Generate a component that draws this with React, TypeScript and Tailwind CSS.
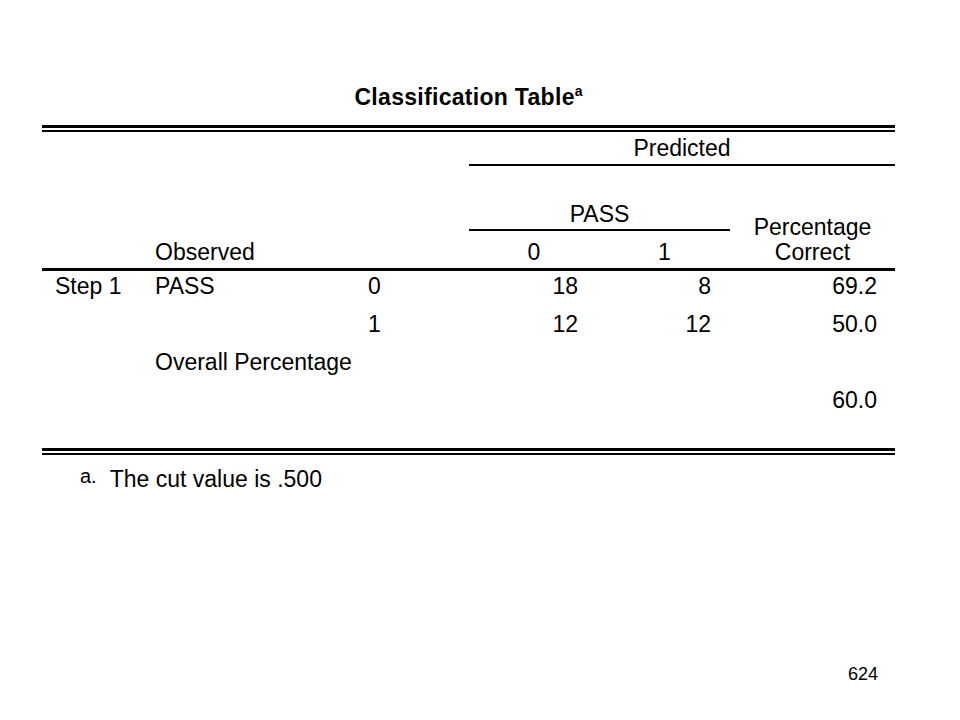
import React from "react";

export default function App() {
  return (
    <div className="w-[960px] h-[720px] bg-white text-black font-['Liberation_Sans',Arial,sans-serif] overflow-hidden">
      <div className="ml-[42px] w-[853px] pt-[84px] flex flex-col">
        <div className="h-[26px] text-center text-[23px] font-bold leading-[26px] tracking-[0.3px]">
          Classification Table<span className="text-[14px] font-bold leading-[0] align-[9px] tracking-normal">a</span>
        </div>
        <div className="mt-[15px] h-[3px] bg-black" />
        <div className="mt-[2px] h-[2px] bg-black" />

        {/* header */}
        <div className="grid grid-cols-[108px_200px_119px_130px_131px_165px] grid-rows-[34px_65px_37px] text-[23px] leading-[26px]">
          <div className="col-start-4 col-span-3 row-start-1 border-b-2 border-black text-center pt-[3px]">
            Predicted
          </div>
          <div className="col-start-4 col-span-2 row-start-2 border-b-2 border-black flex items-end justify-center pb-[2px]">
            PASS
          </div>
          <div className="col-start-6 row-start-2 row-span-2 flex flex-col items-center justify-end pb-[3px] leading-[25px]">
            <span>Percentage</span>
            <span>Correct</span>
          </div>
          <div className="col-start-2 row-start-3 flex items-end pl-[5px] pb-[3px]">Observed</div>
          <div className="col-start-4 row-start-3 flex items-end justify-center pb-[3px]">0</div>
          <div className="col-start-5 row-start-3 flex items-end justify-center pb-[3px]">1</div>
        </div>
        <div className="h-[3px] bg-black" />

        {/* body */}
        <div className="grid grid-cols-[108px_200px_119px_130px_131px_165px] auto-rows-[38px] text-[23px] leading-[26px]">
          <div className="pl-[13px] pt-[2px]">Step 1</div>
          <div className="pl-[5px] pt-[2px]">PASS</div>
          <div className="pl-[18px] pt-[2px]">0</div>
          <div className="text-right pr-[21px] pt-[2px]">18</div>
          <div className="text-right pr-[19px] pt-[2px]">8</div>
          <div className="text-right pr-[18px] pt-[2px]">69.2</div>

          <div />
          <div />
          <div className="pl-[18px] pt-[2px]">1</div>
          <div className="text-right pr-[21px] pt-[2px]">12</div>
          <div className="text-right pr-[19px] pt-[2px]">12</div>
          <div className="text-right pr-[18px] pt-[2px]">50.0</div>

          <div />
          <div className="col-span-2 pl-[5px] pt-[2px] whitespace-nowrap">Overall Percentage</div>
          <div />
          <div />
          <div />

          <div className="col-start-6 text-right pr-[18px] pt-[2px]">60.0</div>
        </div>

        <div className="mt-[25px] h-[3px] bg-black" />
        <div className="mt-[2px] h-[2px] bg-black" />

        <div className="mt-[11px] pl-[38px] flex items-baseline leading-[26px]">
          <span className="text-[20px] -translate-y-[4px]">a.</span>
          <span className="text-[23px] ml-[13px]">The cut value is .500</span>
        </div>

        <div className="mt-[170px] pr-[17px] text-right text-[18px] leading-[22px]">624</div>
      </div>
    </div>
  );
}
